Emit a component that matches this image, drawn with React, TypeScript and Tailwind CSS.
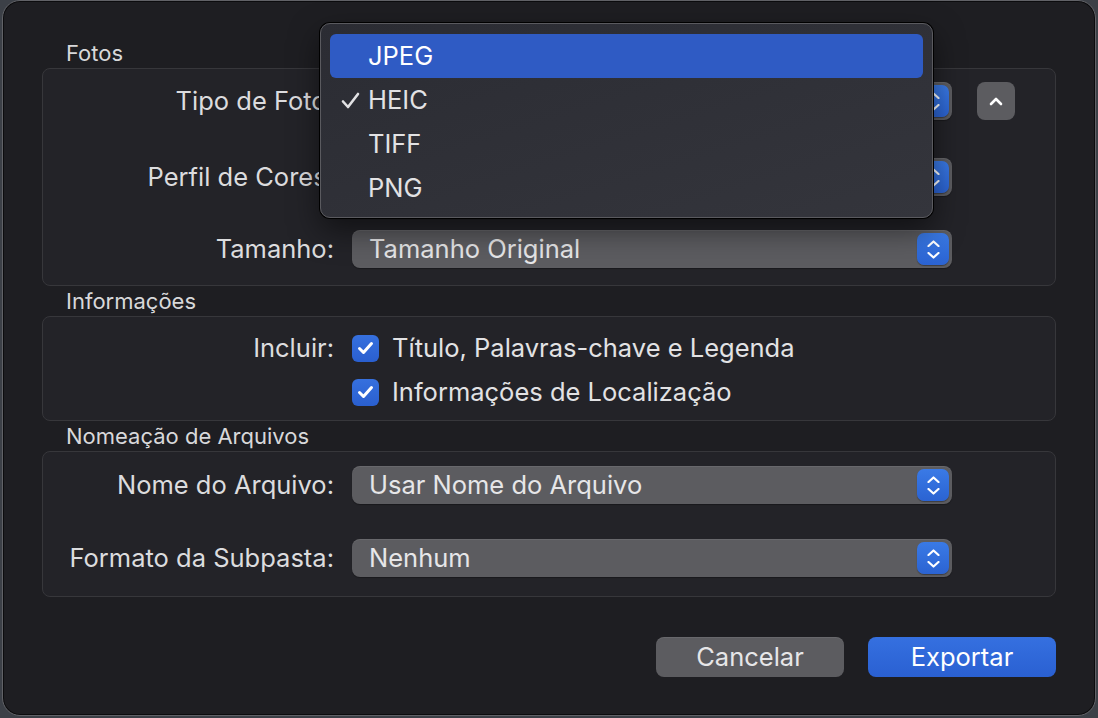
import { ReactNode } from "react";

const font = { fontFamily: "Inter, 'Noto Sans', sans-serif" };

function Stepper() {
  return (
    <div className="flex h-[32px] w-[32px] flex-col items-center justify-center gap-[5px] rounded-[7px] bg-gradient-to-b from-[#3a7ae6] to-[#2b63d2] shadow-[0_1px_1px_rgba(0,0,0,0.35)]">
      <svg width="13" height="7" viewBox="0 0 13 7" fill="none">
        <path d="M1.5 6L6.5 1.5L11.5 6" stroke="white" strokeWidth="2.2" strokeLinecap="round" strokeLinejoin="round" />
      </svg>
      <svg width="13" height="7" viewBox="0 0 13 7" fill="none">
        <path d="M1.5 1L6.5 5.5L11.5 1" stroke="white" strokeWidth="2.2" strokeLinecap="round" strokeLinejoin="round" />
      </svg>
    </div>
  );
}

function Select({ value }: { value: string }) {
  return (
    <div className="ml-[18px] flex h-[38px] w-[600px] items-center justify-between rounded-[8px] bg-[#5c5c60] pl-[17px] pr-[3px] text-[25.5px] leading-none text-[#e6e6e8] shadow-[inset_0_1px_0_rgba(255,255,255,0.08),0_1px_1px_rgba(0,0,0,0.3)]">
      <span>{value}</span>
      <Stepper />
    </div>
  );
}

function Label({ children }: { children: ReactNode }) {
  return <div className="w-[291px] shrink-0 text-right text-[25.5px] leading-none text-[#dcdcde]">{children}</div>;
}

function Checkbox() {
  return (
    <div className="flex h-[27px] w-[27px] shrink-0 items-center justify-center rounded-[6px] bg-gradient-to-b from-[#3670de] to-[#2a5fcf]">
      <svg width="17" height="14" viewBox="0 0 17 14" fill="none">
        <path d="M2.5 7.5L6.5 11.5L14.5 2.5" stroke="white" strokeWidth="3" strokeLinecap="round" strokeLinejoin="round" />
      </svg>
    </div>
  );
}

function SectionTitle({ title }: { title: string }) {
  return <div className="flex h-[30px] items-center pl-[24px] text-[22px] text-[#d8d8da]">{title}</div>;
}

function Box({ children, className }: { children: ReactNode; className: string }) {
  return (
    <div className={`flex w-[1014px] flex-col rounded-[8px] border border-[#37373b] bg-[#232328] ${className}`}>
      {children}
    </div>
  );
}

const menuItems = ["JPEG", "HEIC", "TIFF", "PNG"];

function FormatMenu() {
  return (
    <div className="absolute left-[317px] top-[22px] flex h-[195px] w-[613px] flex-col rounded-[10px] border border-[#5a5a5f] bg-gradient-to-br from-[#2b2c33] to-[#34353c] px-[9px] pt-[10px] shadow-[0_0_0_1px_#000,0_12px_30px_rgba(0,0,0,0.5)]">
      {menuItems.map((item, i) => (
        <div
          key={item}
          className={`flex h-[44px] shrink-0 items-center rounded-[6px] text-[25.5px] ${
            i === 0 ? "bg-[#2f5bc4] text-white" : "text-[#e2e2e4]"
          }`}
        >
          <span className="flex w-[38px] justify-end pr-[8px]">
            {item === "HEIC" && (
              <svg width="19" height="17" viewBox="0 0 19 17" fill="none">
                <path d="M2 9.5L7 15L17 2" stroke="#e2e2e4" strokeWidth="2.6" strokeLinecap="round" strokeLinejoin="round" />
              </svg>
            )}
          </span>
          <span>{item}</span>
        </div>
      ))}
    </div>
  );
}

export default function App() {
  return (
    <div className="h-[718px] w-[1098px] bg-[#3c4047] px-[2px] pb-[2px]" style={font}>
      <div className="relative flex h-[716px] flex-col rounded-[18px] border border-[#616267] bg-[#1e1e22] pl-[39px] pt-[37px] shadow-[inset_0_0_0_1px_#0c0c0e]">
        <SectionTitle title="Fotos" />
        <Box className="pt-[13px] pb-[17px]">
          <div className="flex items-center">
            <Label>Tipo de Foto:</Label>
            <Select value="HEIC" />
            <div className="ml-[25px] flex h-[38px] w-[38px] items-center justify-center rounded-[8px] bg-[#5c5c60]">
              <svg width="14" height="9" viewBox="0 0 14 9" fill="none">
                <path d="M2 7L7 2L12 7" stroke="white" strokeWidth="2.6" strokeLinecap="round" strokeLinejoin="round" />
              </svg>
            </div>
          </div>
          <div className="mt-[38px] flex items-center">
            <Label>Perfil de Cores:</Label>
            <Select value="sRGB" />
          </div>
          <div className="mt-[34px] flex items-center">
            <Label>Tamanho:</Label>
            <Select value="Tamanho Original" />
          </div>
        </Box>

        <SectionTitle title="Informações" />
        <Box className="pt-[17px] pb-[14px]">
          <div className="flex h-[28px] items-center">
            <Label>Incluir:</Label>
            <div className="ml-[18px] flex items-center gap-[13px] text-[25.5px] text-[#e2e2e4]">
              <Checkbox />
              <span>Título, Palavras-chave e Legenda</span>
            </div>
          </div>
          <div className="mt-[16px] flex h-[28px] items-center">
            <div className="w-[291px] shrink-0" />
            <div className="ml-[18px] flex items-center gap-[13px] text-[25.5px] text-[#e2e2e4]">
              <Checkbox />
              <span>Informações de Localização</span>
            </div>
          </div>
        </Box>

        <SectionTitle title="Nomeação de Arquivos" />
        <Box className="pt-[14px] pb-[19px]">
          <div className="flex items-center">
            <Label>Nome do Arquivo:</Label>
            <Select value="Usar Nome do Arquivo" />
          </div>
          <div className="mt-[35px] flex items-center">
            <Label>Formato da Subpasta:</Label>
            <Select value="Nenhum" />
          </div>
        </Box>

        <div className="mt-[40px] flex w-[1014px] justify-end gap-[24px] text-[25.5px]">
          <button className="h-[40px] w-[188px] rounded-[8px] bg-[#5c5c60] text-[#e6e6e8] shadow-[inset_0_1px_0_rgba(255,255,255,0.08)]">
            Cancelar
          </button>
          <button className="h-[40px] w-[188px] rounded-[8px] bg-gradient-to-b from-[#3570e0] to-[#2a60d2] text-white">
            Exportar
          </button>
        </div>

        <FormatMenu />
      </div>
    </div>
  );
}
